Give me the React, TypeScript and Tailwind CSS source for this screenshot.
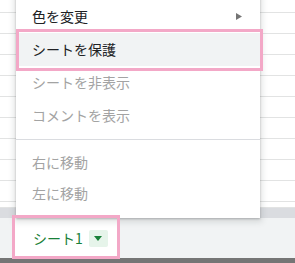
import React from "react";

const font = { fontFamily: '"Noto Sans CJK JP", "Noto Sans", sans-serif' };

function Row({ h }: { h: string }) {
  return <div className={`${h} border-b border-[#e2e3e3] bg-white`} />;
}

export default function App() {
  return (
    <div className="relative w-[295px] h-[263px] overflow-hidden bg-white" style={font}>
      {/* sheet grid */}
      <div className="flex flex-col">
        <div className="h-[13px] border-b border-[#e2e3e3]" />
        {Array.from({ length: 9 }).map((_, i) => (
          <div key={i} className="h-[21px] border-b border-[#e2e3e3]" />
        ))}
        <div className="h-[6px] border-b border-[#e2e3e3]" />
        <div className="h-[10px] bg-[#dadce0]" />
        <div className="h-[40px] bg-[#f1f3f4] pl-[15px] flex">
          <div className="w-[102px] h-full bg-white flex items-center pl-[18px] gap-[6px]">
            <span className="text-[14px] text-[#188038] leading-none">シート1</span>
            <span className="w-[19px] h-[17px] rounded-[2px] bg-[#e6f4ea] flex items-center justify-center">
              <svg width="8" height="5" viewBox="0 0 8 5">
                <path d="M0 0 L8 0 L4 5 Z" fill="#188038" />
              </svg>
            </span>
          </div>
        </div>
        <div className="h-[5px] bg-[#757575]" />
      </div>

      {/* context menu */}
      <div className="absolute left-[16px] top-[-6px] w-[244px] h-[224px] bg-white pt-[6px] shadow-[0_2px_6px_2px_rgba(60,64,67,0.15),0_1px_2px_rgba(60,64,67,0.3)] text-[14px]">
        <div className="h-[33px] flex items-center justify-between pl-[16px] pr-[18px] text-[#202124]">
          <span>色を変更</span>
          <svg width="6" height="7" viewBox="0 0 6 7">
            <path d="M0 0 L6 3.5 L0 7 Z" fill="#757575" />
          </svg>
        </div>
        <div className="h-[33px] flex items-center pl-[16px] text-[#202124] bg-[#f1f3f4]">
          <span>シートを保護</span>
        </div>
        <div className="h-[33px] flex items-center pl-[16px] text-[#a3a3a3]">
          <span>シートを非表示</span>
        </div>
        <div className="h-[33px] flex items-center pl-[16px] text-[#a3a3a3]">
          <span>コメントを表示</span>
        </div>
        <div className="mt-[7px] mb-[7px] border-t border-[#dadce0]" />
        <div className="h-[31px] flex items-center pl-[16px] text-[#a3a3a3]">
          <span>右に移動</span>
        </div>
        <div className="h-[31px] flex items-center pl-[16px] text-[#a3a3a3]">
          <span>左に移動</span>
        </div>
      </div>

      {/* pink annotation boxes */}
      <div className="absolute left-[16px] top-[29px] w-[247px] h-[42px] border-[3px] border-[#f3a8c7]" />
      <div className="absolute left-[12px] top-[215px] w-[108px] h-[44px] border-[3px] border-[#f3a8c7]" />
    </div>
  );
}
